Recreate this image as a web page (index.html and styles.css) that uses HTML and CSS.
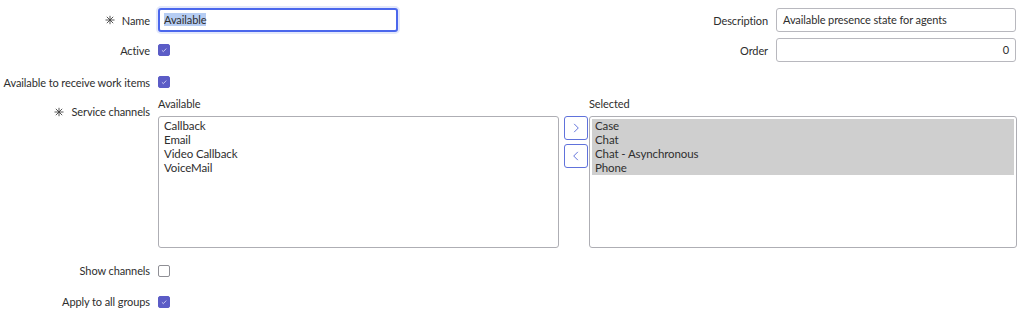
FILE: index.html
```html
<!DOCTYPE html>
<html>
<head>
<meta charset="utf-8">
<link rel="stylesheet" href="styles.css">
</head>
<body>
<div class="form">
  <div class="top">
    <div class="col left">
      <div class="row r-input">
        <label class="lbl"><svg class="req" viewBox="0 0 10 10"><path d="M0.5 5 H9.5 M1.8 1.8 L8.2 8.2 M1.8 8.2 L8.2 1.8 M5 0.8 V9.2"/></svg>Name</label>
        <div class="input focus"><span class="sel">Available</span></div>
      </div>
      <div class="row r-check">
        <label class="lbl">Active</label>
        <span class="cb on"><svg viewBox="0 0 12 12"><path d="M3.5 6.3 L5.2 8 L8.7 4.3" /></svg></span>
      </div>
      <div class="row r-check">
        <label class="lbl">Available to receive work items</label>
        <span class="cb on"><svg viewBox="0 0 12 12"><path d="M3.5 6.3 L5.2 8 L8.7 4.3" /></svg></span>
      </div>
    </div>
    <div class="col right">
      <div class="row r-input">
        <label class="lbl">Description</label>
        <div class="input">Available presence state for agents</div>
      </div>
      <div class="row r-input2">
        <label class="lbl">Order</label>
        <div class="input num">0</div>
      </div>
    </div>
  </div>

  <div class="channels">
    <label class="lbl ch-lbl"><svg class="req" viewBox="0 0 10 10"><path d="M0.5 5 H9.5 M1.8 1.8 L8.2 8.2 M1.8 8.2 L8.2 1.8 M5 0.8 V9.2"/></svg>Service channels</label>
    <div class="slush">
      <div class="list-col avail">
        <div class="list-head">Available</div>
        <div class="list">
          <div class="opt">Callback</div>
          <div class="opt">Email</div>
          <div class="opt">Video Callback</div>
          <div class="opt">VoiceMail</div>
        </div>
      </div>
      <div class="buttons">
        <button class="mv"><svg viewBox="0 0 24 24"><path d="M10 7.5 L14.5 12 L10 16.5"/></svg></button>
        <button class="mv"><svg viewBox="0 0 24 24"><path d="M14 7.5 L9.5 12 L14 16.5"/></svg></button>
      </div>
      <div class="list-col chosen">
        <div class="list-head">Selected</div>
        <div class="list">
          <div class="opt picked">Case</div>
          <div class="opt picked">Chat</div>
          <div class="opt picked">Chat - Asynchronous</div>
          <div class="opt picked">Phone</div>
        </div>
      </div>
    </div>
  </div>

  <div class="bottom">
    <div class="row r-check">
      <label class="lbl">Show channels</label>
      <span class="cb"></span>
    </div>
    <div class="row r-check">
      <label class="lbl">Apply to all groups</label>
      <span class="cb on"><svg viewBox="0 0 12 12"><path d="M3.5 6.3 L5.2 8 L8.7 4.3" /></svg></span>
    </div>
  </div>
</div>
</body>
</html>
```

FILE: styles.css
```css
* { box-sizing: border-box; }
html, body { margin: 0; padding: 0; background: #fff; }
body {
  font-family: Lato, "Open Sans", "Liberation Sans", sans-serif;
  font-size: 11px;
  letter-spacing: -0.1px;
  color: #2e2e2e;
}
.form { padding-top: 8px; width: 1024px; }
.top { display: flex; justify-content: space-between; padding-right: 8px; }
.col { display: flex; flex-direction: column; }
.row { display: flex; align-items: center; gap: 8px; }
.lbl { display: flex; align-items: center; justify-content: flex-end; white-space: nowrap; }
.left .lbl { width: 150px; }
.right .lbl { width: 0; flex: 1; }
.right { width: 340px; }
.r-input { height: 24px; }
.r-input2 { height: 24px; margin-top: 6px; }
.left .r-check { height: 32px; }
.left .r-input + .r-check { margin-top: 2px; }
.req { width: 10px; height: 10px; margin-right: 7px; }
.req path { fill: none; stroke: #444; stroke-width: 0.9; }
.input {
  width: 240px; height: 24px;
  border: 1px solid #b8b8be; border-radius: 3px;
  padding: 0 6px; line-height: 22px;
  background: #fff;
}
.input.focus {
  border: 2px solid #4b67ec;
  box-shadow: 0 0 0 2px #e3e8fb;
  padding: 0 4px; line-height: 20px;
}
.sel { background: #b6cdf3; }
.num { text-align: right; }
.cb {
  width: 12px; height: 12px; border-radius: 2px;
  border: 1px solid #8f8f95; background: #fff;
  display: inline-flex;
}
.cb.on { background: #5b5cc6; border-color: #5b5cc6; }
.cb svg { width: 10px; height: 10px; }
.cb path { fill: none; stroke: #dcdcf6; stroke-width: 1; }
.channels { display: flex; gap: 8px; }
.ch-lbl { width: 150px; padding-top: 7px; align-items: flex-start; }
.ch-lbl .req { margin-top: 2px; }
.slush { display: flex; align-items: flex-start; }
.list-col { display: flex; flex-direction: column; }
.list-head { height: 18px; line-height: 12px; }
.avail .list { width: 401px; }
.chosen .list { width: 428px; }
.list {
  height: 132px;
  border: 1px solid #aeaeb4; border-radius: 3px;
  padding: 2px;
}
.opt { padding: 0 3px; line-height: 14px; height: 14px; font-size: 11.5px; }
.picked { background: #cfcfcf; }
.buttons {
  display: flex; flex-direction: column; gap: 4px;
  padding: 18px 1px 0 5px;
}
.mv {
  width: 24px; height: 24px; padding: 0; margin: 0;
  border: 1px solid #6072db; border-radius: 3px;
  background: #fff; display: flex; align-items: center; justify-content: center;
}
.mv svg { width: 22px; height: 22px; }
.mv path { fill: none; stroke: #5468d8; stroke-width: 1; }
.bottom { margin-top: 7px; }
.bottom .lbl { width: 150px; }
.bottom .r-check { height: 31px; }
```
